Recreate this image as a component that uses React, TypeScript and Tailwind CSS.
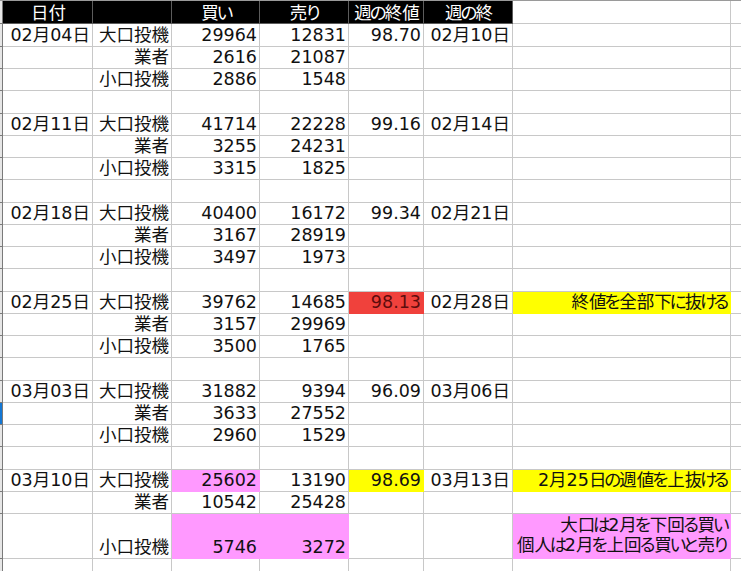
import React from "react";

type Fill = "red" | "yellow" | "pink";
type Cell = { t?: string; a?: "r" | "c"; fill?: Fill; lines?: string[] };
type Row = { h: string; cells: Cell[]; mark?: boolean };

const FILL: Record<Fill, string> = {
  red: "bg-[#f0413c] border-[#f0413c] text-[#5e0c0c]",
  yellow: "bg-[#ffff00] border-[#ffff00]",
  pink: "bg-[#ff99ff] border-[#ff99ff]",
};

// row heights incl. bottom gridline, taken from the sheet
const HEIGHTS = [
  "h-[23px]", "h-[22px]", "h-[22px]", "h-[23px]",
  "h-[22px]", "h-[22px]", "h-[22px]", "h-[23px]",
  "h-[22px]", "h-[22px]", "h-[22px]", "h-[23px]",
  "h-[22px]", "h-[22px]", "h-[22px]", "h-[23px]",
  "h-[22px]", "h-[22px]", "h-[22px]", "h-[23px]",
  "h-[22px]", "h-[22px]", "h-[45px]", "h-[22px]",
];

type Week = {
  date: string;
  buy: number[];
  sell: number[];
  close: string;
  end: string;
  closeFill?: Fill;
  note?: string;
};

const weeks: Week[] = [
  { date: "02月04日", buy: [29964, 2616, 2886], sell: [12831, 21087, 1548], close: "98.70", end: "02月10日" },
  { date: "02月11日", buy: [41714, 3255, 3315], sell: [22228, 24231, 1825], close: "99.16", end: "02月14日" },
  { date: "02月18日", buy: [40400, 3167, 3497], sell: [16172, 28919, 1973], close: "99.34", end: "02月21日" },
  { date: "02月25日", buy: [39762, 3157, 3500], sell: [14685, 29969, 1765], close: "98.13", end: "02月28日", closeFill: "red", note: "終値を全部下に抜ける" },
  { date: "03月03日", buy: [31882, 3633, 2960], sell: [9394, 27552, 1529], close: "96.09", end: "03月06日" },
  { date: "03月10日", buy: [25602, 10542, 5746], sell: [13190, 25428, 3272], close: "98.69", end: "03月13日", closeFill: "yellow", note: "2月25日の週値を上抜ける" },
];

const kinds = ["大口投機", "業者", "小口投機"];

function buildRows(): Row[] {
  const out: Cell[][] = [];
  weeks.forEach((w, wi) => {
    const last = wi === weeks.length - 1;
    kinds.forEach((k, i) => {
      const first = i === 0;
      const cells: Cell[] = [
        { t: first ? w.date : "", a: "r" },
        { t: k, a: "r" },
        { t: String(w.buy[i]), a: "r", fill: last && i !== 1 ? "pink" : undefined },
        { t: String(w.sell[i]), a: "r", fill: last && i === 2 ? "pink" : undefined },
        { t: first ? w.close : "", a: "r", fill: first ? w.closeFill : undefined },
        { t: first ? w.end : "", a: "r" },
        first && w.note
          ? { t: w.note, a: "r", fill: "yellow" }
          : last && i === 2
          ? { lines: ["大口は2月を下回る買い", "個人は2月を上回る買いと売り"], fill: "pink" }
          : {},
      ];
      out.push(cells);
    });
    out.push([{}, {}, {}, {}, {}, {}, {}]);
  });
  return out.slice(0, HEIGHTS.length).map((cells, i) => ({ h: HEIGHTS[i], cells, mark: i === 17 }));
}

// Excel's gothic font sets kana narrower than kanji; squeeze hiragana the same way
function Jp({ text }: { text?: string }) {
  if (!text) return null;
  return (
    <>
      {Array.from(text).map((ch, i) =>
        /[\u3040-\u309f]/.test(ch) ? (
          <span key={i} className="mx-[-2.3px]">
            {ch}
          </span>
        ) : (
          <React.Fragment key={i}>{ch}</React.Fragment>
        )
      )}
    </>
  );
}

function SheetCell({ cell, h }: { cell: Cell; h: string }) {
  const fill = cell.fill ? FILL[cell.fill] : "border-[#c8c8c8]";
  const align = cell.a === "c" ? "justify-center" : "justify-end";
  return (
    <div className={`${h} ${fill} flex ${align} items-end border-r border-b pr-[2px] pb-[2px] overflow-hidden whitespace-nowrap`}>
      {cell.lines ? (
        <div className="flex flex-col items-end leading-[20px] pb-[1px]">
          {cell.lines.map((l) => (
            <span key={l}>
              <Jp text={l} />
            </span>
          ))}
        </div>
      ) : (
        <span className="leading-[18px]">
          <Jp text={cell.t} />
        </span>
      )}
    </div>
  );
}

const headers = ["日付", "", "買い", "売り", "週の終値", "週の終"];

export default function App() {
  const rows = buildRows();
  return (
    <div className="h-[571px] w-[741px] overflow-hidden bg-white text-[17.5px] text-[#111] font-['DejaVu_Sans','Noto_Sans_CJK_JP',sans-serif]">
      <div className="grid grid-cols-[3px_90px_79px_88px_89px_75px_89px_218px_1fr] border-t border-[#9a9a9a]">
        {/* header row */}
        <div className="h-[23px] border-r border-b border-[#7a7a7a] bg-[#e6e6e6]" />
        {headers.map((h, i) => (
          <div
            key={i}
            className="h-[23px] flex items-end justify-center border-r border-b border-[#5c5c5c] bg-black text-white pb-[1px] pl-[2px] whitespace-nowrap overflow-hidden"
          >
            <span className="leading-[18px]">
              <Jp text={h} />
            </span>
          </div>
        ))}
        <div className="h-[23px] border-r border-b border-[#c8c8c8]" />
        <div className="h-[23px] border-b border-[#c8c8c8]" />

        {rows.map((r, ri) => (
          <React.Fragment key={ri}>
            <div className={`${r.h} border-r border-b border-[#7a7a7a] ${r.mark ? "bg-[#1477d4]" : "bg-[#e6e6e6]"}`} />
            {r.cells.map((c, ci) => (
              <SheetCell key={ci} cell={c} h={r.h} />
            ))}
            <div className={`${r.h} border-b border-[#c8c8c8]`} />
          </React.Fragment>
        ))}
      </div>
    </div>
  );
}
